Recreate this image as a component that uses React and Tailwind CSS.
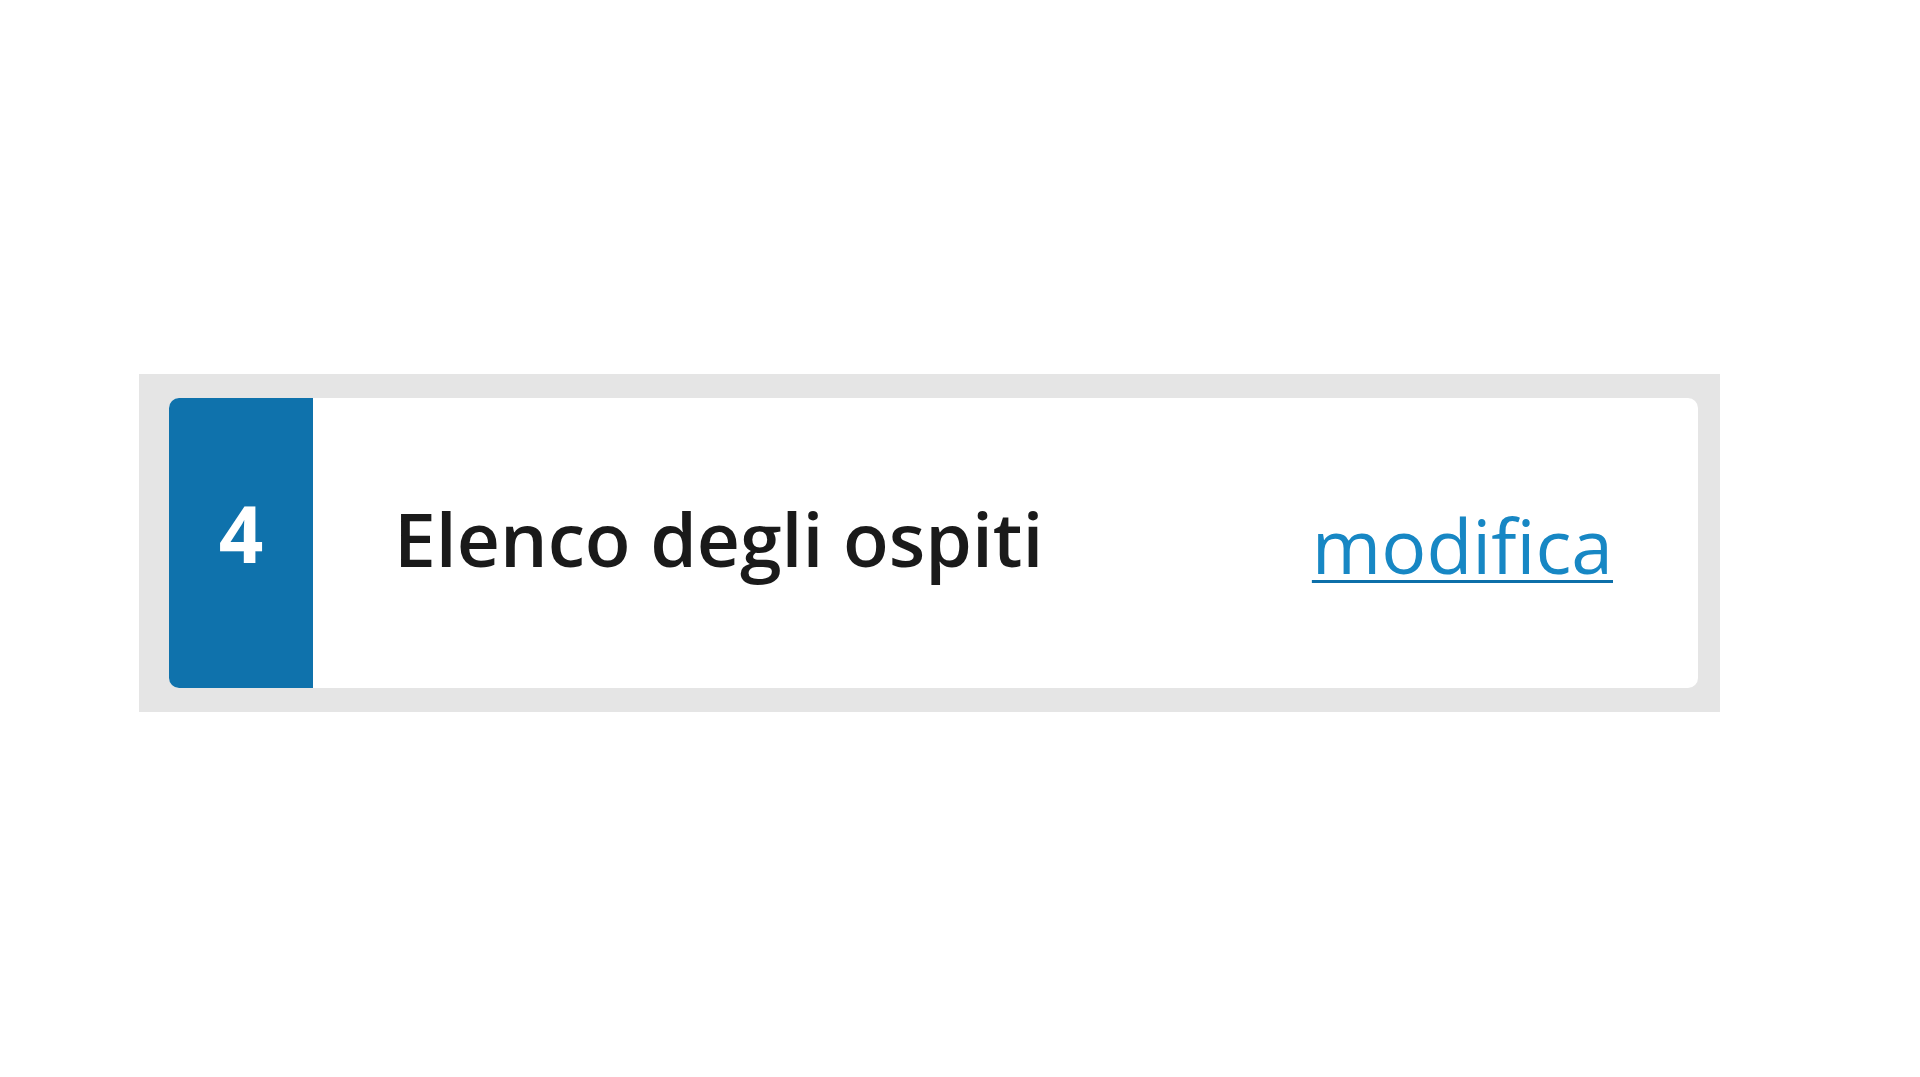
export default function App() {
  return (
    <div className="min-h-[1077px] w-[1920px] bg-white pt-[374px] pl-[139px]" style={{ fontFamily: '"Open Sans", "Noto Sans", sans-serif' }}>
      <div className="w-[1581px] bg-[#e5e5e5] pl-[30px] pr-[22px] py-[24px]">
        <div className="flex h-[290px] overflow-hidden rounded-[10px] bg-white">
          <div className="flex w-[144px] shrink-0 justify-center bg-[#0f72ac]">
            <span className="mt-[96px] text-[78px] font-bold leading-none text-white">4</span>
          </div>
          <div className="ml-[81px] mt-[103px] flex-1 text-[75px] font-semibold leading-none text-[#1a1a1a]">
            Elenco degli ospiti
          </div>
          <a
            href="#"
            className="mr-[85px] mt-[110px] self-start text-[75px] font-normal leading-none text-[#1787c4] underline decoration-[#0d6fa9] decoration-[3px] underline-offset-[6px]"
          >
            modifica
          </a>
        </div>
      </div>
    </div>
  );
}
